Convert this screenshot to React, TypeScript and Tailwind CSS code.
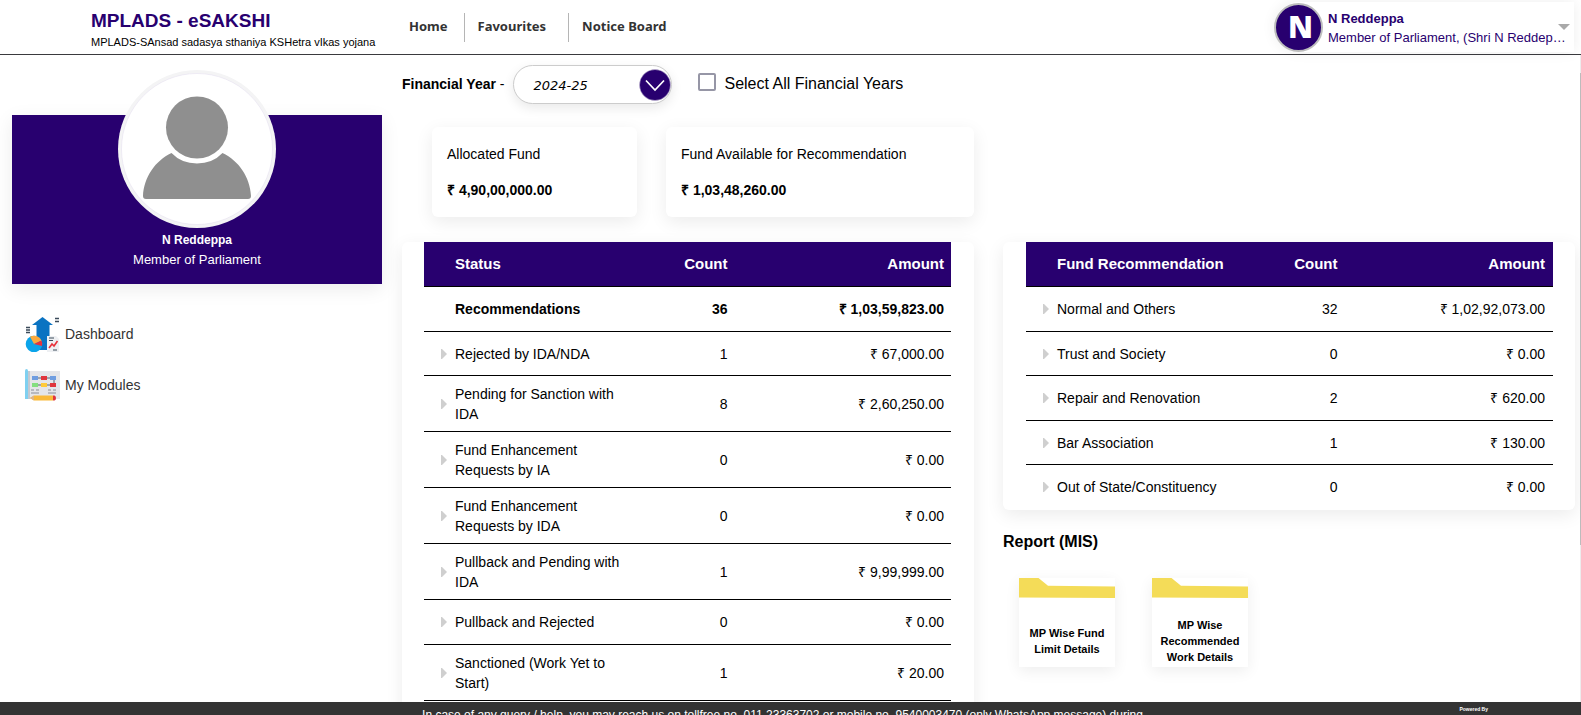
import React from "react";

type Row = { name: string; count: string; amount: string; total?: boolean };

const statusRows: Row[] = [
  { name: "Recommendations", count: "36", amount: "₹ 1,03,59,823.00", total: true },
  { name: "Rejected by IDA/NDA", count: "1", amount: "₹ 67,000.00" },
  { name: "Pending for Sanction with IDA", count: "8", amount: "₹ 2,60,250.00" },
  { name: "Fund Enhancement Requests by IA", count: "0", amount: "₹ 0.00" },
  { name: "Fund Enhancement Requests by IDA", count: "0", amount: "₹ 0.00" },
  { name: "Pullback and Pending with IDA", count: "1", amount: "₹ 9,99,999.00" },
  { name: "Pullback and Rejected", count: "0", amount: "₹ 0.00" },
  { name: "Sanctioned (Work Yet to Start)", count: "1", amount: "₹ 20.00" },
];

const fundRows: Row[] = [
  { name: "Normal and Others", count: "32", amount: "₹ 1,02,92,073.00" },
  { name: "Trust and Society", count: "0", amount: "₹ 0.00" },
  { name: "Repair and Renovation", count: "2", amount: "₹ 620.00" },
  { name: "Bar Association", count: "1", amount: "₹ 130.00" },
  { name: "Out of State/Constituency", count: "0", amount: "₹ 0.00" },
];

const cardShadow = "shadow-[0_5px_18px_rgba(0,0,0,0.08)]";

function FundTable({ title, rows, wide }: { title: string; rows: Row[]; wide?: boolean }) {
  const countWidth = wide ? "w-12" : "w-10";
  const amountPad = wide ? "pr-2" : "pr-[7px]";
  return (
    <div className={`rounded-md bg-white ${wide ? "pr-[22px] pb-px pl-[23px]" : "pr-[23px] pb-8 pl-[22px]"} ${cardShadow}`}>
      <table className="w-full table-fixed border-collapse text-[14px] leading-5 text-black">
        <thead>
          <tr className="h-11 border-b border-black bg-[#28006f] text-[15px] text-white">
            <th className="w-1/2 p-0 pl-[31px] text-left font-bold">{title}</th>
            <th className="w-1/2 p-0 font-bold" colSpan={2}>
              <div className="flex">
                <span className={`${countWidth} flex justify-end whitespace-nowrap`}>Count</span>
                <span className={`flex-1 text-right ${amountPad}`}>Amount</span>
              </div>
            </th>
          </tr>
        </thead>
        <tbody>
          {rows.map((r) => (
            <tr
              key={r.name}
              className={`border-b border-black odd:h-[45px] even:h-11 ${wide ? "last:border-b-0" : ""} ${r.total ? "font-bold" : ""}`}
            >
              <td className="px-0 pt-2 pb-[7px]">
                <div className="flex items-center">
                  <span className="flex w-[31px] shrink-0 pl-[17px]">
                    {!r.total && (
                      <button type="button" aria-label={`Expand ${r.name}`} className="block">
                        <svg width="6" height="10" viewBox="0 0 6 10">
                          <path d="M0 0h1l5 5-5 5H0z" fill="#cfcfcf" />
                        </svg>
                      </button>
                    )}
                  </span>
                  <span className="w-[176px]">{r.name}</span>
                </div>
              </td>
              <td className="p-0 pt-px" colSpan={2}>
                <div className="flex">
                  <span className={`${countWidth} text-right`}>{r.count}</span>
                  <span className={`flex-1 text-right ${amountPad}`}>{r.amount}</span>
                </div>
              </td>
            </tr>
          ))}
        </tbody>
      </table>
    </div>
  );
}

function Avatar() {
  return (
    <svg width="158" height="158" viewBox="0 0 158 158" className="-mt-[45px] block shrink-0">
      <circle cx="79" cy="79" r="79" fill="#f4f4f5" />
      <circle cx="79" cy="79" r="75.5" fill="#fff" stroke="#e2dcee" strokeWidth=".5" />
      <circle cx="79" cy="57.500" r="31" fill="#8f8f8f" />
      <path d="M53.500 83C37 91 26 107 25 126q0 3 3 3h102q3 0 3-3C132 107 121 91 104.500 83q-10 10.500-25.500 10.500T53.500 83z" fill="#8f8f8f" />
    </svg>
  );
}

function DashboardIcon() {
  return (
    <svg width="35" height="35" viewBox="0 0 35 35">
      <path d="M17.500 0 28 8h-3.500v25h-13V8H7z" fill="#0a73c2" />
      <path d="M1 10.500h4M1 13h4M1 15.500h4M30 1.500h4M30 4.500h4" stroke="#3b4a5a" strokeWidth="1.300" />
      <circle cx="9" cy="27" r="8.300" fill="#0ba4ea" />
      <path d="M9 27 5 19.700a8.300 8.300 0 0 1 11.500 3.800z" fill="#fbaa3f" />
      <path d="m9 27 7.500-3.500a8.300 8.300 0 0 1 .5 5.500z" fill="#e8303a" />
      <path d="M22 19h9l3 3v13H22z" fill="#eef0f3" />
      <path d="M24 21h5M24 23.500h4M28 33h4" stroke="#3b4a5a" strokeWidth="1.200" />
      <path d="m24 31 3-4 2 2 3.500-5" fill="none" stroke="#e8303a" strokeWidth="1.600" />
    </svg>
  );
}

function ModulesIcon() {
  return (
    <svg width="35" height="33" viewBox="0 0 35 33">
      <path d="M3 2h32v28H3z" fill="#e4e5e9" />
      <path d="M0 2q0-2 1.500-2T3 2v28H0z" fill="#7fd0f0" />
      <path d="M3 2h2v28H3z" fill="#c4c8d0" />
      <path d="M9 9h20v7H9" fill="none" stroke="#5b6472" strokeWidth="1" />
      <path d="M7 7h6v4H7zM25 7h6v4h-6z" fill="#6f9de0" />
      <path d="M16 7h6v4h-6zM25 14h6v4h-6z" fill="#e0343c" />
      <path d="M7 14h6v4H7z" fill="#84df80" />
      <path d="M16 14h6v4h-6z" fill="#ffca3a" />
      <path d="M6 21h3M11 21h3M6 24h8M23 21h3M28 21h3M23 24h8" stroke="#8a8e98" strokeWidth="1.200" />
      <path d="m5 29 4-2.500h19v5H9z" fill="#f9b93a" />
      <path d="m5 29 4-2.500v5z" fill="#dcb48a" />
      <path d="M28 26.500h1.500Q31 27 31 29t-1.500 2.500H28z" fill="#e0343c" />
    </svg>
  );
}

function ReportFolder({ label }: { label: string }) {
  return (
    <a href="#report" className="flex h-[89px] w-24 flex-col bg-white shadow-[0_4px_14px_rgba(0,0,0,0.07)]">
      <svg width="96" height="20" viewBox="0 0 96 20" className="shrink-0">
        <path d="M0 0h19.500L29 7.700 96 8.500V20L0 19.500z" fill="#f4dc58" />
      </svg>
      <span className="flex flex-1 items-center justify-center px-1 pt-4 text-center text-[11px] leading-4 font-bold text-black">
        {label}
      </span>
    </a>
  );
}

export default function App() {
  return (
    <div className="flex h-screen flex-col overflow-hidden bg-white font-['Liberation_Sans',Arial,sans-serif] text-black">
      <header className="flex h-[55px] shrink-0 items-center border-b border-[#3a3a3e]">
        <div className="w-[310px] shrink-0 pt-1 pl-[91px] whitespace-nowrap">
          <h1 className="text-[19px] leading-6 font-bold text-[#28006f]">MPLADS - eSAKSHI</h1>
          <p className="pt-px text-[11px] leading-4">MPLADS-SAnsad sadasya sthaniya KSHetra vIkas yojana</p>
        </div>
        <nav className="ml-[99px] flex items-center font-['Noto_Sans','Open_Sans',sans-serif] text-[13px] font-bold text-[#333]">
          <a href="#home" className="pr-4">Home</a>
          <a href="#favourites" className="flex h-[29px] items-center border-l border-[#b5b5b5] pr-[22px] pl-[13px]">Favourites</a>
          <a href="#notice" className="flex h-[29px] items-center border-l border-[#b5b5b5] pl-[13px]">Notice Board</a>
        </nav>
        <button
          type="button"
          className="mr-[7px] ml-auto flex h-[50px] w-[300px] items-center rounded-l-full rounded-r-xl bg-white text-left text-[#28006f] shadow-[0_0_14px_rgba(0,0,0,0.07)]"
        >
          <span className="flex size-[49px] shrink-0 items-center justify-center rounded-full border-2 border-[#bdbdbd] bg-[#28006f] pl-1 font-['Open_Sans','Noto_Sans',sans-serif] text-[30px] leading-none font-extrabold text-white">
            N
          </span>
          <span className="ml-[5px] w-[236px] shrink-0 pt-[2px]">
            <span className="block text-[13px] leading-[19px] font-bold">N Reddeppa</span>
            <span className="block text-[13px] leading-[19px] whitespace-nowrap">Member of Parliament, (Shri N Reddep…</span>
          </span>
          <svg width="12" height="6" viewBox="0 0 12 6" className="-ml-[6px] shrink-0">
            <path d="M0 0h12L6 6z" fill="#a9a9a9" />
          </svg>
        </button>
      </header>

      <div className="flex min-h-0 flex-1">
        <div className="flex min-w-0 flex-1 gap-5 overflow-hidden pr-[5px] pl-3">
          <aside className="w-[370px] shrink-0 pt-[60px]">
            <section className={`flex h-[169px] flex-col items-center bg-[#28006f] text-white ${cardShadow}`}>
              <Avatar />
              <h2 className="pt-[2px] text-[12px] leading-5 font-bold">N Reddeppa</h2>
              <p className="text-[13px] leading-5">Member of Parliament</p>
            </section>
            <nav className="mt-[33px] flex flex-col gap-4 pl-[13px] text-[14px] text-[#333]">
              <a href="#dashboard" className="flex h-[35px] items-center gap-[5px]">
                <DashboardIcon />
                Dashboard
              </a>
              <a href="#modules" className="flex h-[35px] items-center gap-[5px]">
                <ModulesIcon />
                My Modules
              </a>
            </nav>
          </aside>

          <main className="min-w-0 flex-1 pt-[10px]">
            <div className="flex h-[39px] items-center">
              <label htmlFor="year" className="text-[14px] whitespace-nowrap">
                <b>Financial Year</b> -
              </label>
              <div className="relative ml-[9px] h-[39px] w-[159px]">
                <select
                  id="year"
                  defaultValue="2024-25"
                  className="h-full w-full appearance-none rounded-full border border-[#ccc] bg-white pt-[2px] pl-[19px] font-['DejaVu_Sans',sans-serif] text-[13px] text-black italic shadow-[0_4px_12px_rgba(0,0,0,0.09)]"
                >
                  <option>2024-25</option>
                  <option>2023-24</option>
                </select>
                <svg width="32" height="32" viewBox="0 0 32 32" className="pointer-events-none absolute top-1 right-px">
                  <circle cx="16" cy="16" r="15.500" fill="#28006f" stroke="#cfc8dc" strokeWidth=".5" />
                  <path d="m7 11.500 9 9.500 9-9.500" fill="none" stroke="#fff" strokeWidth="1.700" />
                </svg>
              </div>
              <div className="ml-[26px] flex items-center pb-[2px]">
                <input
                  id="all"
                  type="checkbox"
                  className="mb-1 size-[18px] appearance-none rounded-[2px] border-2 border-[#9696a6] bg-white checked:bg-[#28006f]"
                />
                <label htmlFor="all" className="ml-2 text-[16px]">Select All Financial Years</label>
              </div>
            </div>

            <div className="mt-[23px] grid grid-cols-2 gap-[29px]">
              <div className="flex gap-[29px] pl-[30px]">
                <section className={`h-[90px] w-[205px] rounded-md bg-white px-[15px] pt-[17px] text-[14px] leading-5 ${cardShadow}`}>
                  <h3>Allocated Fund</h3>
                  <p className="mt-4 font-bold">₹ 4,90,00,000.00</p>
                </section>
                <section className={`h-[90px] flex-1 rounded-md bg-white px-[15px] pt-[17px] text-[14px] leading-5 ${cardShadow}`}>
                  <h3>Fund Available for Recommendation</h3>
                  <p className="mt-4 font-bold">₹ 1,03,48,260.00</p>
                </section>
              </div>
            </div>

            <div className="mt-[25px] grid grid-cols-2 items-start gap-[29px]">
              <FundTable title="Status" rows={statusRows} />
              <div>
                <FundTable title="Fund Recommendation" rows={fundRows} wide />
                <h2 className="mt-5 text-[16px] leading-6 font-bold">Report (MIS)</h2>
                <div className="mt-6 flex gap-[37px] pl-4">
                  <ReportFolder label="MP Wise Fund Limit Details" />
                  <ReportFolder label="MP Wise Recommended Work Details" />
                </div>
              </div>
            </div>
          </main>
        </div>
        <div className="w-px shrink-0 bg-[#ededed] pt-[18px]">
          <div className="h-3/4 bg-[#bcbcbc]" />
        </div>
      </div>

      <footer className="grid h-[13px] shrink-0 grid-cols-[1fr_auto_1fr] overflow-hidden bg-[#333] text-white">
        <span />
        <p className="pt-[3px] pr-4 text-[12px] leading-5">
          In case of any query / help, you may reach us on tollfree no. 011 23363702 or mobile no. 9540003470 (only WhatsApp message) during
        </p>
        <p className="pt-1 pr-[93px] text-right text-[5px] leading-[7px] font-bold">Powered By</p>
      </footer>
    </div>
  );
}
